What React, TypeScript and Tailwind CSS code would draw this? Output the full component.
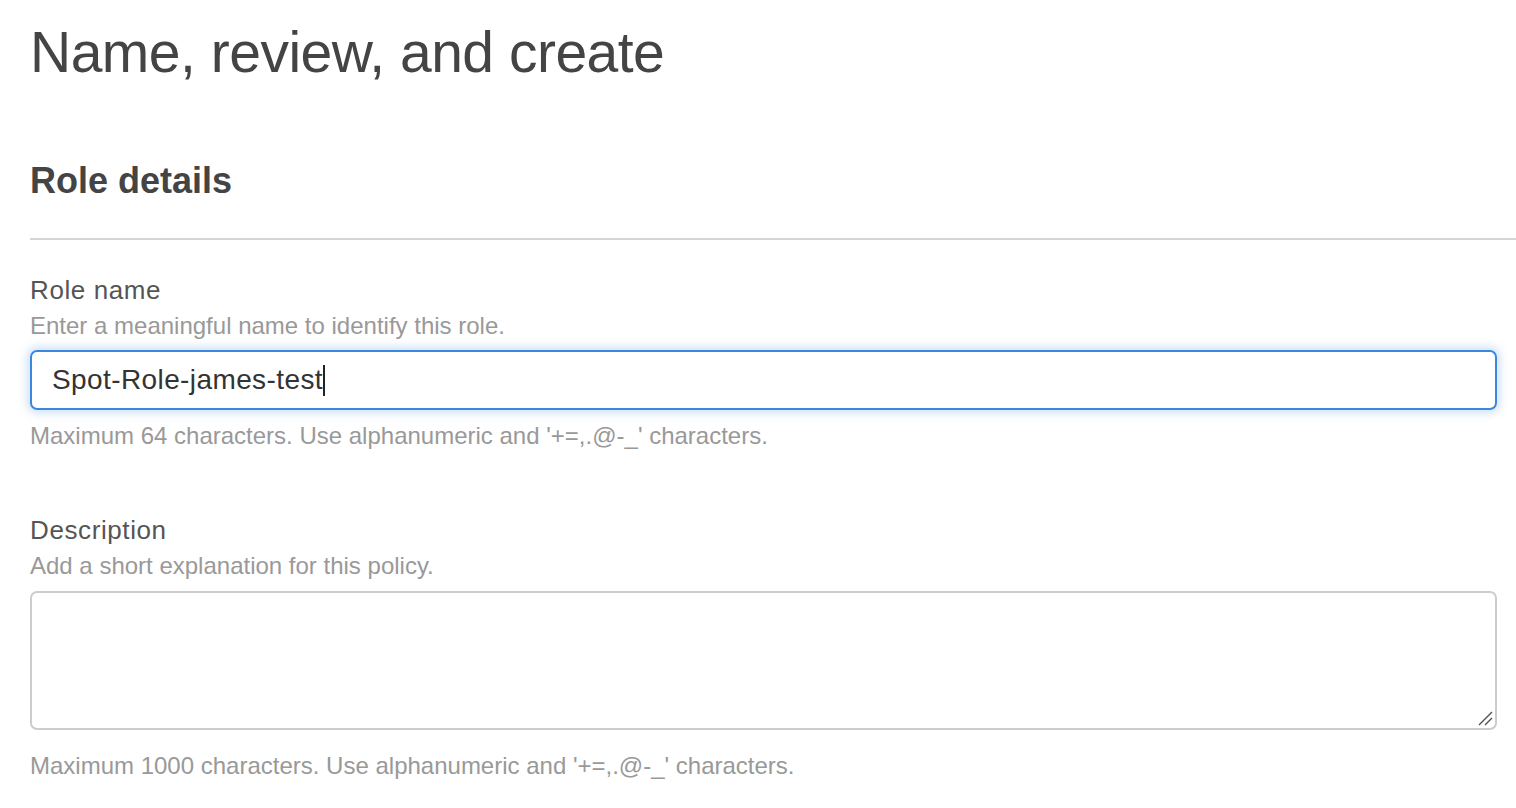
import React from "react";

export default function App() {
  return (
    <div className="w-[1516px] h-[808px] bg-white overflow-hidden" style={{ fontFamily: '"Liberation Sans", Arial, sans-serif' }}>
      <div className="pl-[30px]">
        <h1 className="text-[57px] leading-[64px] text-[#444444] pt-[20px] tracking-[-0.5px]">Name, review, and create</h1>
        <h2 className="text-[36px] leading-[44px] font-bold text-[#444444] mt-[75px]">Role details</h2>
        <div className="h-[2px] bg-[#d5d5d5] mt-[35px]"></div>
        <div className="pr-[19px]">
          <div className="text-[26px] leading-[30px] text-[#555555] mt-[35px] tracking-[0.6px]">Role name</div>
          <div className="text-[24px] leading-[28px] text-[#999999] mt-[7px]">Enter a meaningful name to identify this role.</div>
          <div className="mt-[10px] h-[60px] border-2 border-[#3a87e0] rounded-[7px] shadow-[0_0_8px_3px_rgba(58,135,224,0.25)] flex items-center pl-[20px]">
            <span className="text-[28px] text-[#333333] tracking-[0.4px]">Spot-Role-james-test</span>
            <span className="w-[2px] h-[31px] bg-[#222]"></span>
          </div>
          <div className="text-[24px] leading-[28px] text-[#999999] mt-[12px]">Maximum 64 characters. Use alphanumeric and '+=,.@-_' characters.</div>
          <div className="text-[26px] leading-[30px] text-[#555555] mt-[65px] tracking-[0.6px]">Description</div>
          <div className="text-[24px] leading-[28px] text-[#999999] mt-[7px]">Add a short explanation for this policy.</div>
          <div className="relative mt-[11px] h-[139px] border-2 border-[#cccccc] rounded-[7px]">
            <svg className="absolute right-[2px] bottom-[2px]" width="16" height="16" viewBox="0 0 16 16">
              <line x1="2" y1="15" x2="15" y2="2" stroke="#555" strokeWidth="1.4" />
              <line x1="8" y1="15" x2="15" y2="8" stroke="#555" strokeWidth="1.4" />
            </svg>
          </div>
          <div className="text-[24px] leading-[28px] text-[#999999] mt-[22px]">Maximum 1000 characters. Use alphanumeric and '+=,.@-_' characters.</div>
        </div>
      </div>
    </div>
  );
}
